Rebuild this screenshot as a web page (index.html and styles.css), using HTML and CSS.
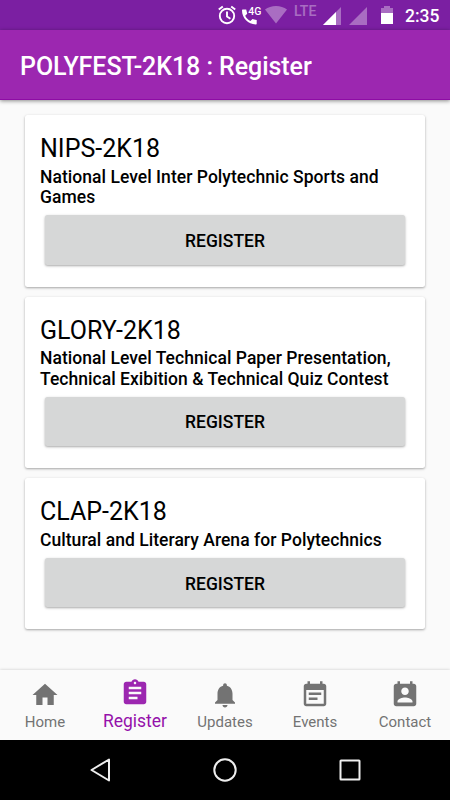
FILE: index.html
```html
<!DOCTYPE html>
<html lang="en">
<head>
<meta charset="utf-8">
<title>POLYFEST-2K18 : Register</title>
<link rel="stylesheet" href="styles.css">
</head>
<body>
<div class="status-bar">
  <svg class="alarm" width="18" height="30" viewBox="0 0 18 30" fill="none" stroke="currentColor" stroke-width="1.9"><circle cx="9" cy="16" r="7.2"/><path d="M9 11.5v5l3.4 2.2M.8 9.6l4-3.2M17.2 9.6l-4-3.2"/></svg>
  <svg class="call" width="20" height="30" viewBox="0 0 20 30" fill="currentColor"><path d="M1 9.500h3.200l1 4.200-2 2.100c1.200 2.400 2.800 4.100 5.200 5.300l2.100-2 4.200 1v3.300c0 .7-.4 1-1 1C6.200 24.400 0 18 0 10.500c0-.6.300-1 1-1z"/><text class="network-label" x="6.200" y="15">4G</text></svg>
  <svg class="wifi" width="22" height="30" viewBox="0 0 22 30" fill="currentColor"><path d="M11 23.500L0 9.600C3 7.200 6.800 6 11 6s8 1.200 11 3.600z"/></svg>
  <span class="lte">LTE</span>
  <svg class="signal" width="18" height="30" viewBox="0 0 18 30" fill="currentColor"><path opacity=".35" d="M18 7v18H0z"/><path d="M13 12v13H0z"/></svg>
  <svg class="signal-empty" width="18" height="30" viewBox="0 0 18 30" fill="currentColor"><path d="M18 7v18H0z"/></svg>
  <svg class="battery" width="12" height="30" viewBox="0 0 12 30" fill="currentColor"><path opacity=".35" d="M0 8h3V6h6v2h3v5H0z"/><path d="M0 13h12v11H0z"/></svg>
  <span class="clock">2:35</span>
</div>
<header class="app-bar"><h1>POLYFEST-2K18 : Register</h1></header>
<main class="content">
  <section class="card">
    <h2>NIPS-2K18</h2>
    <p>National Level Inter Polytechnic Sports and Games</p>
    <button>REGISTER</button>
  </section>
  <section class="card">
    <h2>GLORY-2K18</h2>
    <p>National Level Technical Paper Presentation, Technical Exibition &amp; Technical Quiz Contest</p>
    <button>REGISTER</button>
  </section>
  <section class="card">
    <h2>CLAP-2K18</h2>
    <p>Cultural and Literary Arena for Polytechnics</p>
    <button>REGISTER</button>
  </section>
</main>
<nav class="tabs">
  <a class="tab"><svg viewBox="0 0 24 24"><path d="M10 20v-6h4v6h5v-8h3L12 3 2 12h3v8z"/></svg><span>Home</span></a>
  <a class="tab active"><svg viewBox="0 0 24 24"><path d="M19 3h-4.180C14.400 1.840 13.300 1 12 1s-2.400.840-2.820 2H5c-1.100 0-2 .900-2 2v14c0 1.100.900 2 2 2h14c1.100 0 2-.900 2-2V5c0-1.100-.900-2-2-2zm-7 0c.550 0 1 .450 1 1s-.450 1-1 1-1-.450-1-1 .450-1 1-1zm2 14H7v-2h7v2zm3-4H7v-2h10v2zm0-4H7V7h10v2z"/></svg><span>Register</span></a>
  <a class="tab"><svg viewBox="0 0 24 24"><path d="M12 22c1.100 0 2-.900 2-2h-4c0 1.100.890 2 2 2zm6-6v-5c0-3.070-1.640-5.640-4.500-6.320V4c0-.830-.670-1.500-1.500-1.500s-1.500.670-1.500 1.500v.680C7.630 5.360 6 7.920 6 11v5l-2 2v1h16v-1l-2-2z"/></svg><span>Updates</span></a>
  <a class="tab"><svg viewBox="0 0 24 24"><path d="M17 10H7v2h10v-2zm2-7h-1V1h-2v2H8V1H6v2H5c-1.110 0-1.990.900-1.990 2L3 19c0 1.100.890 2 2 2h14c1.100 0 2-.900 2-2V5c0-1.100-.900-2-2-2zm0 16H5V8h14v11zm-5-5H7v2h7v-2z"/></svg><span>Events</span></a>
  <a class="tab"><svg viewBox="0 0 24 24"><path d="M19 3h-1V1h-2v2H8V1H6v2H5c-1.110 0-2 .900-2 2v14c0 1.100.890 2 2 2h14c1.100 0 2-.900 2-2V5c0-1.100-.900-2-2-2zm-7 3c1.660 0 3 1.340 3 3s-1.340 3-3 3-3-1.340-3-3 1.340-3 3-3zm6 12H6v-1c0-2 4-3.100 6-3.100s6 1.100 6 3.100v1z"/></svg><span>Contact</span></a>
</nav>
<div class="system-nav">
  <svg viewBox="0 0 30 30"><path d="M24 4.500v21L6.500 15z"/></svg>
  <svg viewBox="0 0 30 30"><circle cx="15" cy="15" r="10.700"/></svg>
  <svg viewBox="0 0 30 30"><rect x="5.500" y="5.500" width="19" height="19" rx=".5"/></svg>
</div>
</body>
</html>
```
FILE: styles.css
```css
* { box-sizing: border-box; }

body {
  margin: 0;
  width: 450px;
  height: 800px;
  display: flex;
  flex-direction: column;
  overflow: hidden;
  background: #fafafa;
  color: #000;
  font-family: Roboto, sans-serif;
}

h1, h2, p { margin: 0; }

.status-bar {
  flex: none;
  display: flex;
  height: 30px;
  padding-left: 218px;
  background: #7b1fa2;
  color: #fff;
}

.status-bar svg { flex: none; }
.call { margin-left: 6px; }
.network-label { font-size: 10.5px; font-weight: 500; }
.wifi { margin-left: 3px; opacity: .35; }

.lte {
  width: 24px;
  margin-left: 7px;
  padding-top: 4px;
  font-size: 14px;
  font-weight: 500;
  line-height: 15px;
  opacity: .35;
}

.signal { margin-left: 5px; }
.signal-empty { margin-left: 8px; opacity: .35; }
.battery { margin-left: 14px; }

.clock {
  margin-left: 12px;
  font-size: 17.5px;
  font-weight: 500;
  line-height: 33px;
}

.app-bar {
  flex: none;
  height: 70px;
  padding-left: 20px;
  background: #9c27b0;
  border-bottom: 1px solid #8e0ca5;
  box-shadow: 0 1px 4px rgba(0, 0, 0, .45);
  color: #fff;
}

.app-bar h1 {
  font-size: 25px;
  font-weight: 500;
  letter-spacing: -.06px;
  line-height: 74px;
}

.content {
  flex: 1;
  display: flex;
  flex-direction: column;
  gap: 10.2px;
  padding: 15px 25px 0;
}

.card {
  padding: 16px 15px 22px;
  background: #fff;
  border-radius: 2.5px;
  box-shadow: 0 1px 2.5px rgba(0, 0, 0, .35);
}

.card h2 {
  font-size: 25px;
  font-weight: 400;
  line-height: 36px;
}

.card p {
  margin-top: -.5px;
  font-size: 17.5px;
  font-weight: 500;
  letter-spacing: .04px;
  line-height: 20.5px;
}

.card button {
  display: block;
  width: 360px;
  height: 49.5px;
  margin: 7.5px 5px 0;
  padding: 2px 0 0;
  border: 0;
  border-radius: 2.5px;
  background: #d6d7d7;
  box-shadow: 0 1px 2.5px rgba(0, 0, 0, .35);
  color: #000;
  font: 500 17.5px Roboto, sans-serif;
}

.tabs {
  flex: none;
  display: flex;
  height: 70px;
  background: #fafafa;
  box-shadow: 0 0 3px rgba(0, 0, 0, .2);
}

.tab {
  flex: 1;
  display: flex;
  flex-direction: column;
  align-items: center;
  padding-top: 10px;
  color: #737373;
  font-size: 15px;
  line-height: 24px;
}

.tab svg {
  width: 30px;
  height: 30px;
  fill: currentColor;
}

.tab.active {
  padding-top: 7.5px;
  color: #9c27b0;
  font-size: 17.5px;
}

.tab.active span { padding-top: 1.5px; color: #9511aa; }

.system-nav {
  flex: none;
  display: flex;
  justify-content: center;
  gap: 95px;
  height: 60px;
  padding-top: 15px;
  background: #000;
}

.system-nav svg {
  width: 30px;
  height: 30px;
  fill: none;
  stroke: #eee;
  stroke-width: 2;
  stroke-linejoin: round;
}
```
